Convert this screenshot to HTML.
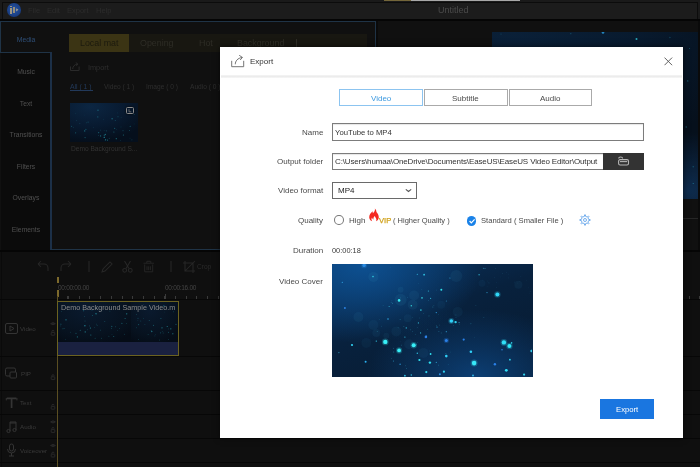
<!DOCTYPE html>
<html><head><meta charset="utf-8">
<style>
*{margin:0;padding:0;box-sizing:border-box}
html,body{width:700px;height:467px;overflow:hidden;background:#101010;font-family:"Liberation Sans",sans-serif}
.a{position:absolute}
.t{position:absolute;white-space:nowrap;line-height:1;will-change:transform}
.dim{color:#3a3a3a}
</style></head><body>
<!-- ===== background app ===== -->
<div class="a" style="left:0;top:0;width:700px;height:20px;background:#1a1a1a"></div>
<div class="a" style="left:384px;top:0;width:27px;height:1px;background:#74663a"></div>
<div class="a" style="left:411px;top:0;width:109px;height:1px;background:#a8a8a8"></div>
<!-- title bar -->
<div class="a" style="left:1.5px;top:1.5px;width:696.5px;height:18px;background:#1c1c1c;border:1px solid #0c0c0c;border-bottom:none"></div>
<div class="a" style="left:0;top:19px;width:700px;height:2px;background:#050505"></div>
<!-- logo -->
<div class="a" style="left:7px;top:2.9px;width:13.5px;height:13.7px;border-radius:50%;background:radial-gradient(circle at 50% 45%,#2452a0,#1c4288 55%,#15326e 85%,#0f2656)"></div>
<div class="a" style="left:10.3px;top:6px;width:1.4px;height:1.3px;background:#9c9684"></div>
<div class="a" style="left:10.3px;top:8.3px;width:1.4px;height:5.5px;background:#9c9684"></div>
<div class="a" style="left:13.3px;top:7px;width:1.5px;height:5.5px;background:#948e7c"></div>
<svg class="a" style="left:15.5px;top:7.8px" width="3" height="4" viewBox="0 0 3 4"><path d="M0.2 0.2L2.4 1.8 0.2 3.6z" fill="#a8a290"/></svg>
<div class="t" style="left:27.5px;top:6.9px;font-size:7.5px;color:#2c2c2c">File</div>
<div class="t" style="left:47px;top:6.9px;font-size:7.5px;color:#2c2c2c">Edit</div>
<div class="t" style="left:67.3px;top:6.9px;font-size:7.5px;color:#2c2c2c">Export</div>
<div class="t" style="left:95.5px;top:6.9px;font-size:7.5px;color:#2c2c2c">Help</div>
<div class="t" style="left:438px;top:5.5px;font-size:9px;color:#4a4a4a">Untitled</div>

<!-- left sidebar -->
<div class="a" style="left:0;top:21px;width:700px;height:230px;background:#101010"></div>
<div class="a" style="left:0;top:21px;width:376px;height:1px;background:#1f3346"></div>
<div class="a" style="left:0;top:21px;width:1px;height:32px;background:#1f3346"></div>
<div class="a" style="left:0;top:52px;width:51px;height:1px;background:#1f3346"></div>
<div class="a" style="left:1px;top:53px;width:49.5px;height:197px;background:#0b0b0b"></div>
<div class="a" style="left:50.4px;top:52px;width:1.3px;height:198px;background:#1c3048"></div>
<div class="a" style="left:51px;top:249px;width:325px;height:1px;background:#1f3346"></div>
<div class="a" style="left:375px;top:21px;width:1px;height:229px;background:#1f3346"></div>
<div class="t" style="left:1px;width:50px;text-align:center;top:36.8px;font-size:6.8px;color:#2e4e76">Media</div>
<div class="t" style="left:1px;width:50px;text-align:center;top:68.6px;font-size:6.8px;color:#505050">Music</div>
<div class="t" style="left:1px;width:50px;text-align:center;top:100.6px;font-size:6.8px;color:#505050">Text</div>
<div class="t" style="left:1px;width:50px;text-align:center;top:132.2px;font-size:6.8px;color:#505050">Transitions</div>
<div class="t" style="left:1px;width:50px;text-align:center;top:164.0px;font-size:6.8px;color:#505050">Filters</div>
<div class="t" style="left:1px;width:50px;text-align:center;top:195.4px;font-size:6.8px;color:#505050">Overlays</div>
<div class="t" style="left:1px;width:50px;text-align:center;top:227.3px;font-size:6.8px;color:#505050">Elements</div>

<!-- media tab bar -->
<div class="a" style="left:69px;top:34px;width:298px;height:18px;background:#181711"></div>
<div class="a" style="left:69px;top:34px;width:60px;height:18px;background:#3b3414"></div>
<div class="t" style="left:80.3px;top:39.2px;font-size:8.9px;color:#1c1a0e">Local mat</div>
<div class="t" style="left:140.3px;top:39.2px;font-size:8.9px;color:#2e2d26">Opening</div>
<div class="t" style="left:199.2px;top:39.2px;font-size:8.9px;color:#2e2d26">Hot</div>
<div class="t" style="left:237.3px;top:39.2px;font-size:8.9px;color:#2e2d26">Background</div>
<div class="a" style="left:296px;top:39px;width:1px;height:9px;background:#2e2d26"></div>
<!-- import -->
<svg class="a" style="left:69px;top:62px" width="12" height="10" viewBox="0 0 12 10" fill="none" stroke="#2a2a2a" stroke-width="1"><path d="M1.5 4.5v4h8.6v-4"/><path d="M3.7 7C3.7 4.5 5.5 2.5 8.5 2M6.8 0.6l2 1.4-1.4 1.8"/></svg>
<div class="t" style="left:87.6px;top:64px;font-size:7.3px;color:#2e2e2e">Import</div>
<div class="t" style="left:70px;top:84px;font-size:6.8px;color:#22395a">All ( 1 )</div>
<div class="a" style="left:70px;top:90px;width:23px;height:1px;background:#22395a"></div>
<div class="t" style="left:103.7px;top:84px;font-size:6.6px;color:#2e2e2e">Video ( 1 )</div>
<div class="t" style="left:146.2px;top:84px;font-size:6.6px;color:#2e2e2e">Image ( 0 )</div>
<div class="t" style="left:189.6px;top:84px;font-size:6.6px;color:#2e2e2e">Audio ( 0 )</div>
<!-- thumb -->
<div class="a" style="left:70px;top:103px;width:68px;height:39px;background:radial-gradient(ellipse 90% 90% at 30% 10%,#0c2642,#081a30 55%,#050f1c);overflow:hidden">
<svg width="68" height="39" viewBox="0 0 68 39"><circle cx="5.6" cy="29.8" r="0.67" fill="#2fb8c8" opacity="0.36"/><circle cx="3.5" cy="24.6" r="0.37" fill="#2fb8c8" opacity="0.38"/><circle cx="5.8" cy="10.2" r="0.34" fill="#2fb8c8" opacity="0.31"/><circle cx="61.9" cy="36.8" r="0.58" fill="#2fb8c8" opacity="0.21"/><circle cx="14.6" cy="12.0" r="0.36" fill="#2fb8c8" opacity="0.21"/><circle cx="23.6" cy="24.6" r="0.38" fill="#2fb8c8" opacity="0.28"/><circle cx="53.0" cy="27.8" r="0.48" fill="#2fb8c8" opacity="0.49"/><circle cx="1.6" cy="23.3" r="0.50" fill="#2fb8c8" opacity="0.43"/><circle cx="14.7" cy="27.9" r="0.70" fill="#2fb8c8" opacity="0.55"/><circle cx="47.8" cy="9.9" r="0.43" fill="#2fb8c8" opacity="0.28"/><circle cx="28.7" cy="29.7" r="0.61" fill="#2fb8c8" opacity="0.34"/><circle cx="42.1" cy="15.8" r="0.68" fill="#2fb8c8" opacity="0.50"/><circle cx="44.6" cy="25.4" r="0.66" fill="#2fb8c8" opacity="0.36"/><circle cx="51.0" cy="23.9" r="0.33" fill="#2fb8c8" opacity="0.42"/><circle cx="33.5" cy="16.2" r="0.33" fill="#2fb8c8" opacity="0.32"/><circle cx="64.1" cy="20.9" r="0.35" fill="#2fb8c8" opacity="0.29"/><circle cx="36.4" cy="27.8" r="0.62" fill="#2fb8c8" opacity="0.26"/><circle cx="9.9" cy="20.7" r="0.38" fill="#2fb8c8" opacity="0.46"/><circle cx="50.5" cy="37.7" r="0.35" fill="#2fb8c8" opacity="0.35"/><circle cx="34.3" cy="34.4" r="0.69" fill="#2fb8c8" opacity="0.48"/><circle cx="35.6" cy="36.7" r="0.64" fill="#2fb8c8" opacity="0.42"/><circle cx="34.2" cy="34.2" r="0.61" fill="#2fb8c8" opacity="0.32"/><circle cx="28.3" cy="29.7" r="0.34" fill="#2fb8c8" opacity="0.40"/><circle cx="15.1" cy="34.6" r="0.68" fill="#2fb8c8" opacity="0.37"/><circle cx="35.4" cy="31.5" r="0.66" fill="#2fb8c8" opacity="0.49"/><circle cx="30.6" cy="32.9" r="0.60" fill="#2fb8c8" opacity="0.53"/><circle cx="51.1" cy="14.6" r="0.47" fill="#2fb8c8" opacity="0.24"/><circle cx="16.6" cy="19.8" r="0.37" fill="#2fb8c8" opacity="0.45"/><circle cx="43.9" cy="28.9" r="0.52" fill="#2fb8c8" opacity="0.50"/><circle cx="18.1" cy="19.1" r="0.67" fill="#2fb8c8" opacity="0.27"/><circle cx="46.7" cy="26.3" r="0.48" fill="#2fb8c8" opacity="0.22"/><circle cx="39.3" cy="35.4" r="0.53" fill="#2fb8c8" opacity="0.25"/><circle cx="60.2" cy="23.3" r="0.58" fill="#2fb8c8" opacity="0.40"/><circle cx="34.1" cy="27.8" r="0.31" fill="#2fb8c8" opacity="0.52"/><circle cx="59.4" cy="27.6" r="0.49" fill="#2fb8c8" opacity="0.46"/><circle cx="53.4" cy="32.0" r="0.59" fill="#2fb8c8" opacity="0.52"/><circle cx="28.0" cy="7.2" r="0.62" fill="#2fb8c8" opacity="0.52"/><circle cx="64.1" cy="11.5" r="0.47" fill="#2fb8c8" opacity="0.48"/><circle cx="48.0" cy="13.8" r="0.55" fill="#2fb8c8" opacity="0.33"/><circle cx="6.3" cy="17.4" r="0.33" fill="#2fb8c8" opacity="0.42"/><circle cx="27.8" cy="13.9" r="0.59" fill="#2fb8c8" opacity="0.40"/><circle cx="60.0" cy="35.1" r="0.31" fill="#2fb8c8" opacity="0.41"/><circle cx="15.9" cy="26.4" r="0.58" fill="#2fb8c8" opacity="0.37"/><circle cx="30.5" cy="27.1" r="0.42" fill="#2fb8c8" opacity="0.44"/><circle cx="34.3" cy="32.2" r="0.66" fill="#2fb8c8" opacity="0.43"/><circle cx="37.5" cy="37.1" r="0.62" fill="#2fb8c8" opacity="0.52"/><circle cx="45.3" cy="17.5" r="0.53" fill="#2fb8c8" opacity="0.31"/><circle cx="46.3" cy="35.7" r="0.63" fill="#2fb8c8" opacity="0.50"/><circle cx="28.5" cy="32.4" r="0.48" fill="#2fb8c8" opacity="0.30"/><circle cx="35.3" cy="37.1" r="0.55" fill="#2fb8c8" opacity="0.37"/></svg></div>
<div class="a" style="left:125.8px;top:107px;width:8.2px;height:7px;border:1px solid #8a8a8a;border-radius:1.5px;box-shadow:0 0 2px #000"></div><svg class="a" style="left:127px;top:108px" width="6" height="5" viewBox="0 0 6 5"><path d="M2 1.2v2.6h2.3" fill="none" stroke="#777" stroke-width="0.8"/></svg>
<div class="t" style="left:70.5px;top:145.5px;font-size:6.6px;color:#333">Demo Background S...</div>

<!-- preview -->
<div class="a" style="left:376px;top:21px;width:2px;height:230px;background:#0a0a0a"></div>
<div class="a" style="left:491.5px;top:31.5px;width:206px;height:167.5px;background:radial-gradient(ellipse 40% 35% at 95% 95%,rgba(14,44,78,1),rgba(14,44,78,0)),radial-gradient(ellipse 120% 80% at 10% 0%,#0a2038,#081a2e 50%,#06101c);overflow:hidden"><svg width="206" height="168" viewBox="0 0 206 168"><circle cx="170.3" cy="141.0" r="0.63" fill="#30c0e0" opacity="0.58"/><circle cx="75.1" cy="128.8" r="0.67" fill="#30c0e0" opacity="0.46"/><circle cx="120.1" cy="112.3" r="0.75" fill="#30c0e0" opacity="0.34"/><circle cx="54.6" cy="59.4" r="0.58" fill="#30c0e0" opacity="0.47"/><circle cx="135.7" cy="157.5" r="0.36" fill="#30c0e0" opacity="0.33"/><circle cx="124.6" cy="103.9" r="0.79" fill="#30c0e0" opacity="0.36"/><circle cx="159.7" cy="80.2" r="0.60" fill="#30c0e0" opacity="0.55"/><circle cx="68.9" cy="57.6" r="0.59" fill="#30c0e0" opacity="0.45"/><circle cx="95.9" cy="107.8" r="0.74" fill="#30c0e0" opacity="0.41"/><circle cx="109.8" cy="144.6" r="0.41" fill="#30c0e0" opacity="0.52"/><circle cx="48.9" cy="83.9" r="0.71" fill="#30c0e0" opacity="0.24"/><circle cx="79.1" cy="97.8" r="0.67" fill="#30c0e0" opacity="0.25"/><circle cx="51.0" cy="79.8" r="0.54" fill="#30c0e0" opacity="0.47"/><circle cx="4.8" cy="69.9" r="0.54" fill="#30c0e0" opacity="0.37"/><circle cx="55.8" cy="69.2" r="0.54" fill="#30c0e0" opacity="0.29"/><circle cx="119.1" cy="97.3" r="0.65" fill="#30c0e0" opacity="0.43"/><circle cx="194.2" cy="95.0" r="0.77" fill="#30c0e0" opacity="0.37"/><circle cx="28.6" cy="146.5" r="0.77" fill="#30c0e0" opacity="0.31"/><circle cx="67.4" cy="120.0" r="0.61" fill="#30c0e0" opacity="0.39"/><circle cx="79.7" cy="142.2" r="0.32" fill="#30c0e0" opacity="0.32"/><circle cx="177.6" cy="75.6" r="0.44" fill="#30c0e0" opacity="0.57"/><circle cx="47.9" cy="118.8" r="0.32" fill="#30c0e0" opacity="0.26"/><circle cx="98.8" cy="124.4" r="0.74" fill="#30c0e0" opacity="0.31"/><circle cx="83.3" cy="164.0" r="0.76" fill="#30c0e0" opacity="0.32"/><circle cx="87.4" cy="27.7" r="0.58" fill="#30c0e0" opacity="0.44"/><circle cx="195.8" cy="48.9" r="0.55" fill="#30c0e0" opacity="0.54"/><circle cx="35.0" cy="127.1" r="0.78" fill="#30c0e0" opacity="0.42"/><circle cx="91.6" cy="33.5" r="0.76" fill="#30c0e0" opacity="0.45"/><circle cx="18.0" cy="94.4" r="0.43" fill="#30c0e0" opacity="0.24"/><circle cx="117.8" cy="119.2" r="0.52" fill="#30c0e0" opacity="0.42"/><circle cx="79.5" cy="140.3" r="0.51" fill="#30c0e0" opacity="0.25"/><circle cx="89.4" cy="116.6" r="0.66" fill="#30c0e0" opacity="0.26"/><circle cx="57.2" cy="47.7" r="0.62" fill="#30c0e0" opacity="0.46"/><circle cx="31.5" cy="21.4" r="0.32" fill="#30c0e0" opacity="0.36"/><circle cx="74.2" cy="149.9" r="0.77" fill="#30c0e0" opacity="0.55"/><circle cx="183.1" cy="117.7" r="0.77" fill="#30c0e0" opacity="0.42"/><circle cx="201.2" cy="151.4" r="0.51" fill="#30c0e0" opacity="0.59"/><circle cx="177.9" cy="5.6" r="0.77" fill="#30c0e0" opacity="0.23"/><circle cx="99.1" cy="35.7" r="0.37" fill="#30c0e0" opacity="0.35"/><circle cx="76.4" cy="80.9" r="0.52" fill="#30c0e0" opacity="0.51"/><circle cx="80.9" cy="82.4" r="0.80" fill="#30c0e0" opacity="0.29"/><circle cx="197.6" cy="16.6" r="0.50" fill="#30c0e0" opacity="0.38"/><circle cx="120.9" cy="89.8" r="0.78" fill="#30c0e0" opacity="0.52"/><circle cx="152.5" cy="110.8" r="0.59" fill="#30c0e0" opacity="0.52"/><circle cx="156.0" cy="71.7" r="0.40" fill="#30c0e0" opacity="0.21"/><circle cx="135.4" cy="33.0" r="0.49" fill="#30c0e0" opacity="0.41"/><circle cx="119.5" cy="112.6" r="0.42" fill="#30c0e0" opacity="0.30"/><circle cx="116.9" cy="49.8" r="0.35" fill="#30c0e0" opacity="0.55"/><circle cx="66.4" cy="79.0" r="0.64" fill="#30c0e0" opacity="0.47"/><circle cx="9.0" cy="2.0" r="0.51" fill="#30c0e0" opacity="0.29"/><circle cx="78.8" cy="1.7" r="0.65" fill="#30c0e0" opacity="0.27"/><circle cx="5.4" cy="148.7" r="0.49" fill="#30c0e0" opacity="0.44"/><circle cx="33.4" cy="140.3" r="0.71" fill="#30c0e0" opacity="0.32"/><circle cx="128.6" cy="158.7" r="0.37" fill="#30c0e0" opacity="0.54"/><circle cx="41.6" cy="76.8" r="0.56" fill="#30c0e0" opacity="0.47"/><circle cx="167.2" cy="94.4" r="0.33" fill="#30c0e0" opacity="0.25"/><circle cx="55.8" cy="139.6" r="0.54" fill="#30c0e0" opacity="0.44"/><circle cx="42.9" cy="128.2" r="0.73" fill="#30c0e0" opacity="0.42"/><circle cx="159.1" cy="83.6" r="0.31" fill="#30c0e0" opacity="0.32"/><circle cx="117.9" cy="62.4" r="0.40" fill="#30c0e0" opacity="0.52"/><circle cx="188.0" cy="159.3" r="0.41" fill="#30c0e0" opacity="0.36"/><circle cx="53.2" cy="68.0" r="0.69" fill="#30c0e0" opacity="0.38"/><circle cx="201.2" cy="134.7" r="0.71" fill="#30c0e0" opacity="0.30"/><circle cx="41.3" cy="62.4" r="0.57" fill="#30c0e0" opacity="0.50"/><circle cx="18.8" cy="134.7" r="0.37" fill="#30c0e0" opacity="0.55"/><circle cx="111" cy="0.5" r="1.3" fill="#2a9ee0" opacity=".8"/><circle cx="144.5" cy="7" r="1" fill="#30c8d8" opacity=".8"/></svg></div>
<div class="a" style="left:697.5px;top:21px;width:3px;height:446px;background:#0a0a0a"></div>
<div class="a" style="left:378px;top:218px;width:320px;height:1px;background:#262626"></div>

<!-- divider -->
<div class="a" style="left:0;top:250px;width:700px;height:2px;background:#050505"></div>
<div class="a" style="left:0;top:252px;width:700px;height:215px;background:#0f0f0f"></div>
<div class="a" style="left:1px;top:252px;width:1px;height:215px;background:#0a0a0a"></div>
<!-- toolbar icons -->
<svg class="a" style="left:36px;top:260px" width="180" height="14" viewBox="0 0 180 14" fill="none" stroke="#272727" stroke-width="1.05">
<path d="M2 4l3-3M2 4l3 3M2 4h6a4 4 0 0 1 4 4v3"/>
<path d="M35 4l-3-3M35 4l-3 3M35 4h-6a4 4 0 0 0-4 4v3"/>
<path d="M53 1v11"/>
<path d="M66 12l1-3 7-7 2 2-7 7z"/>
<path d="M88.5 1l4.5 7.6M94.5 1L90 8.6"/><circle cx="88.7" cy="10.3" r="1.9"/><circle cx="94.3" cy="10.3" r="1.9"/>
<path d="M107.5 3.2h10.5M110.8 3V1.3h4V3M108.7 4.5v7.3h8V4.5M111 6.3v3.8M112.7 6.3v3.8M114.4 6.3v3.8" stroke-width="0.9"/>
<path d="M135 1v11"/>
<path d="M149 1v10h10M147 3h10v10M149 11l10-10"/>
</svg>
<div class="t" style="left:197px;top:263.5px;font-size:6.6px;color:#2a2a2a">Crop</div>
<!-- ruler -->
<div class="a" style="left:57px;top:277px;width:2.4px;height:5.5px;background:#7d6a2c"></div><div class="a" style="left:57px;top:290px;width:2.4px;height:6.5px;background:#7d6a2c"></div>
<div class="t" style="left:57.5px;top:285px;font-size:6.5px;color:#444;letter-spacing:-0.3px">00:00:00.00</div>
<div class="t" style="left:165px;top:285.2px;font-size:6.5px;color:#444;letter-spacing:-0.3px">00:00:16.00</div>
<div class="a" style="left:57px;top:296px;width:643px;height:3px;background:repeating-linear-gradient(90deg,#3a3a3a 0 1px,transparent 1px 10.7px);background-position:11px 0"></div>
<div class="a" style="left:165px;top:293.5px;width:1px;height:5px;background:#3a3a3a"></div>
<div class="a" style="left:0;top:299px;width:700px;height:1px;background:#070707"></div>
<!-- tracks -->
<div class="a" style="left:0;top:356px;width:700px;height:1px;background:#070707"></div>
<div class="a" style="left:0;top:390px;width:700px;height:1px;background:#070707"></div>
<div class="a" style="left:0;top:414px;width:700px;height:1px;background:#070707"></div>
<div class="a" style="left:0;top:438px;width:700px;height:1px;background:#070707"></div>
<div class="a" style="left:0;top:462px;width:700px;height:1px;background:#070707"></div>
<div class="a" style="left:57px;top:296px;width:1px;height:171px;background:#5a4e22"></div>
<!-- clip -->
<div class="a" style="left:57px;top:301px;width:122px;height:54.5px;border:1px solid #6b6220;background:#1a2140;overflow:hidden">
 <div class="a" style="left:0;top:0;width:73px;height:40px;background:radial-gradient(ellipse 80% 90% at 40% 20%,#0a1a2e,#07121f 70%,#050c16);"></div>
 <div class="a" style="left:73px;top:0;width:47px;height:40px;background:radial-gradient(ellipse 80% 90% at 40% 20%,#0a1a2e,#07121f 70%,#050c16);"></div>
 <svg class="a" style="left:0;top:0" width="120" height="40" viewBox="0 0 120 40"><circle cx="4.9" cy="26.8" r="0.57" fill="#2fb8c8" opacity="0.31"/><circle cx="57.7" cy="24.8" r="0.41" fill="#2fb8c8" opacity="0.61"/><circle cx="25.7" cy="8.8" r="0.52" fill="#2fb8c8" opacity="0.55"/><circle cx="50.9" cy="34.2" r="0.36" fill="#2fb8c8" opacity="0.66"/><circle cx="66.3" cy="32.3" r="0.43" fill="#2fb8c8" opacity="0.43"/><circle cx="38.8" cy="22.1" r="0.32" fill="#2fb8c8" opacity="0.66"/><circle cx="26.9" cy="23.7" r="0.69" fill="#2fb8c8" opacity="0.68"/><circle cx="54.0" cy="32.2" r="0.35" fill="#2fb8c8" opacity="0.39"/><circle cx="27.0" cy="19.0" r="0.58" fill="#2fb8c8" opacity="0.27"/><circle cx="18.0" cy="31.3" r="0.54" fill="#2fb8c8" opacity="0.46"/><circle cx="32.4" cy="26.0" r="0.59" fill="#2fb8c8" opacity="0.69"/><circle cx="68.5" cy="21.4" r="0.44" fill="#2fb8c8" opacity="0.41"/><circle cx="24.5" cy="7.3" r="0.35" fill="#2fb8c8" opacity="0.36"/><circle cx="19.4" cy="34.9" r="0.62" fill="#2fb8c8" opacity="0.48"/><circle cx="12.5" cy="30.2" r="0.39" fill="#2fb8c8" opacity="0.44"/><circle cx="7.8" cy="37.3" r="0.34" fill="#2fb8c8" opacity="0.50"/><circle cx="53.7" cy="26.2" r="0.44" fill="#2fb8c8" opacity="0.54"/><circle cx="59.5" cy="28.3" r="0.38" fill="#2fb8c8" opacity="0.38"/><circle cx="27.2" cy="29.9" r="0.60" fill="#2fb8c8" opacity="0.66"/><circle cx="53.8" cy="24.4" r="0.61" fill="#2fb8c8" opacity="0.40"/><circle cx="36.7" cy="25.6" r="0.32" fill="#2fb8c8" opacity="0.53"/><circle cx="31.7" cy="23.9" r="0.43" fill="#2fb8c8" opacity="0.60"/><circle cx="51.9" cy="9.1" r="0.39" fill="#2fb8c8" opacity="0.49"/><circle cx="6.1" cy="26.4" r="0.41" fill="#2fb8c8" opacity="0.68"/><circle cx="46.8" cy="19.6" r="0.42" fill="#2fb8c8" opacity="0.64"/><circle cx="2.9" cy="22.2" r="0.58" fill="#2fb8c8" opacity="0.35"/><circle cx="32.8" cy="33.0" r="0.57" fill="#2fb8c8" opacity="0.56"/><circle cx="22.2" cy="28.3" r="0.47" fill="#2fb8c8" opacity="0.69"/><circle cx="8.0" cy="17.8" r="0.67" fill="#2fb8c8" opacity="0.68"/><circle cx="38.0" cy="11.5" r="0.54" fill="#2fb8c8" opacity="0.66"/><circle cx="43.5" cy="8.7" r="0.44" fill="#2fb8c8" opacity="0.42"/><circle cx="34.0" cy="8.6" r="0.31" fill="#2fb8c8" opacity="0.57"/><circle cx="68.7" cy="11.8" r="0.66" fill="#2fb8c8" opacity="0.66"/><circle cx="29.3" cy="27.7" r="0.44" fill="#2fb8c8" opacity="0.39"/><circle cx="67.1" cy="16.6" r="0.52" fill="#2fb8c8" opacity="0.53"/><circle cx="55.7" cy="34.5" r="0.58" fill="#2fb8c8" opacity="0.43"/><circle cx="37.1" cy="36.3" r="0.43" fill="#2fb8c8" opacity="0.56"/><circle cx="42.5" cy="28.1" r="0.42" fill="#2fb8c8" opacity="0.56"/><circle cx="38.4" cy="6.4" r="0.67" fill="#2fb8c8" opacity="0.41"/><circle cx="61.4" cy="26.6" r="0.48" fill="#2fb8c8" opacity="0.33"/><circle cx="26.6" cy="14.5" r="0.40" fill="#2fb8c8" opacity="0.40"/><circle cx="39.1" cy="23.5" r="0.44" fill="#2fb8c8" opacity="0.38"/><circle cx="43.5" cy="36.2" r="0.39" fill="#2fb8c8" opacity="0.66"/><circle cx="2.6" cy="23.9" r="0.36" fill="#2fb8c8" opacity="0.46"/><circle cx="3.5" cy="9.7" r="0.40" fill="#2fb8c8" opacity="0.46"/><circle cx="61.8" cy="6.1" r="0.39" fill="#2fb8c8" opacity="0.49"/><circle cx="38.1" cy="12.0" r="0.57" fill="#2fb8c8" opacity="0.55"/><circle cx="63.9" cy="21.4" r="0.57" fill="#2fb8c8" opacity="0.41"/><circle cx="34.4" cy="13.5" r="0.50" fill="#2fb8c8" opacity="0.41"/><circle transform="translate(73 0)" cx="12.5" cy="2.6" r="0.37" fill="#2fb8c8" opacity="0.35"/><circle transform="translate(73 0)" cx="29.6" cy="30.8" r="0.59" fill="#2fb8c8" opacity="0.31"/><circle transform="translate(73 0)" cx="13.9" cy="22.4" r="0.42" fill="#2fb8c8" opacity="0.44"/><circle transform="translate(73 0)" cx="33.6" cy="10.0" r="0.31" fill="#2fb8c8" opacity="0.37"/><circle transform="translate(73 0)" cx="32.9" cy="3.8" r="0.63" fill="#2fb8c8" opacity="0.59"/><circle transform="translate(73 0)" cx="9.8" cy="19.0" r="0.45" fill="#2fb8c8" opacity="0.44"/><circle transform="translate(73 0)" cx="20.8" cy="29.5" r="0.63" fill="#2fb8c8" opacity="0.61"/><circle transform="translate(73 0)" cx="45.0" cy="22.3" r="0.52" fill="#2fb8c8" opacity="0.59"/><circle transform="translate(73 0)" cx="37.5" cy="37.5" r="0.48" fill="#2fb8c8" opacity="0.33"/><circle transform="translate(73 0)" cx="28.5" cy="38.0" r="0.40" fill="#2fb8c8" opacity="0.46"/><circle transform="translate(73 0)" cx="12.3" cy="16.6" r="0.35" fill="#2fb8c8" opacity="0.47"/><circle transform="translate(73 0)" cx="24.4" cy="32.8" r="0.38" fill="#2fb8c8" opacity="0.41"/><circle transform="translate(73 0)" cx="41.8" cy="31.7" r="0.68" fill="#2fb8c8" opacity="0.43"/><circle transform="translate(73 0)" cx="31.0" cy="25.8" r="0.62" fill="#2fb8c8" opacity="0.63"/><circle transform="translate(73 0)" cx="18.2" cy="18.6" r="0.47" fill="#2fb8c8" opacity="0.64"/><circle transform="translate(73 0)" cx="42.7" cy="9.8" r="0.38" fill="#2fb8c8" opacity="0.63"/><circle transform="translate(73 0)" cx="7.7" cy="37.5" r="0.35" fill="#2fb8c8" opacity="0.69"/><circle transform="translate(73 0)" cx="5.5" cy="12.4" r="0.38" fill="#2fb8c8" opacity="0.53"/><circle transform="translate(73 0)" cx="7.0" cy="16.2" r="0.44" fill="#2fb8c8" opacity="0.58"/><circle transform="translate(73 0)" cx="17.1" cy="32.4" r="0.37" fill="#2fb8c8" opacity="0.56"/><circle transform="translate(73 0)" cx="31.2" cy="29.6" r="0.33" fill="#2fb8c8" opacity="0.54"/><circle transform="translate(73 0)" cx="6.9" cy="18.8" r="0.32" fill="#2fb8c8" opacity="0.45"/><circle transform="translate(73 0)" cx="20.1" cy="28.4" r="0.30" fill="#2fb8c8" opacity="0.70"/><circle transform="translate(73 0)" cx="32.1" cy="31.0" r="0.41" fill="#2fb8c8" opacity="0.52"/><circle transform="translate(73 0)" cx="37.5" cy="30.3" r="0.45" fill="#2fb8c8" opacity="0.63"/><circle transform="translate(73 0)" cx="36.2" cy="24.4" r="0.50" fill="#2fb8c8" opacity="0.69"/><circle transform="translate(73 0)" cx="7.6" cy="22.6" r="0.57" fill="#2fb8c8" opacity="0.38"/><circle transform="translate(73 0)" cx="39.8" cy="26.8" r="0.66" fill="#2fb8c8" opacity="0.58"/><circle transform="translate(73 0)" cx="29.9" cy="16.5" r="0.54" fill="#2fb8c8" opacity="0.41"/><circle transform="translate(73 0)" cx="23.9" cy="33.9" r="0.38" fill="#2fb8c8" opacity="0.41"/><circle transform="translate(73 0)" cx="37.3" cy="26.9" r="0.33" fill="#2fb8c8" opacity="0.59"/><circle transform="translate(73 0)" cx="22.5" cy="23.4" r="0.61" fill="#2fb8c8" opacity="0.34"/><circle transform="translate(73 0)" cx="5.7" cy="25.8" r="0.43" fill="#2fb8c8" opacity="0.38"/></svg>
 <div class="t" style="left:3px;top:2.2px;font-size:7.2px;color:#8c8c8c">Demo Background Sample Video.m</div>
</div>
<!-- track headers -->
<svg class="a" style="left:4px;top:322px" width="52" height="140" viewBox="0 0 52 140" fill="none" stroke="#343434" stroke-width="1">
<rect x="1.5" y="1.5" width="12" height="10" rx="1.5"/><path d="M6 4v5l4-2.5z"/>
<rect x="1.5" y="46" width="10" height="8" rx="1.5"/><rect x="6" y="50" width="6.5" height="6" rx="1" fill="#0f0f0f"/>
<path d="M2.8 76.3h9.6M7.6 76.3v9.6" stroke-width="1.7"/><path d="M2.3 76v2.4M12.9 76v2.4" stroke-width="1"/>
<path d="M6 109v-9h6v8M6 101h6"/><circle cx="4.5" cy="109" r="1.6"/><circle cx="10.5" cy="108" r="1.6"/>
<rect x="5.5" y="122" width="4" height="7" rx="2"/><path d="M3.5 127a4 4 0 0 0 8 0M7.5 131v3M5 134h5"/>
</svg>
<div class="t" style="left:20.4px;top:325.8px;font-size:6.2px;color:#3a3a3a">Video</div>
<div class="t" style="left:20.5px;top:370.8px;font-size:6.2px;color:#3a3a3a">PIP</div>
<div class="t" style="left:20px;top:400px;font-size:6.2px;color:#3a3a3a">Text</div>
<div class="t" style="left:20px;top:424px;font-size:6.2px;color:#3a3a3a">Audio</div>
<div class="t" style="left:19.5px;top:448px;font-size:6.2px;color:#3a3a3a">Voiceover</div>
<svg class="a" style="left:49px;top:320px" width="8" height="140" viewBox="0 0 8 140" fill="none" stroke="#2e2e2e" stroke-width="0.8"><path d="M1.6 3.7q2.4-2.2 4.8 0q-2.4 2.2-4.8 0z"/><circle cx="4" cy="3.7" r="0.7" fill="#2e2e2e" stroke="none"/><rect x="2.2" y="12.4" width="3.6" height="2.8" rx="0.4"/><path d="M2.9 12.4v-1a1.1 1.1 0 0 1 2.2 0"/><rect x="2.2" y="56.8" width="3.6" height="2.8" rx="0.4"/><path d="M2.9 56.8v-1a1.1 1.1 0 0 1 2.2 0"/><rect x="2.2" y="86.4" width="3.6" height="2.8" rx="0.4"/><path d="M2.9 86.4v-1a1.1 1.1 0 0 1 2.2 0"/><path d="M1.6 101.9q2.4-2.2 4.8 0q-2.4 2.2-4.8 0z"/><circle cx="4" cy="101.9" r="0.7" fill="#2e2e2e" stroke="none"/><rect x="2.2" y="109.6" width="3.6" height="2.8" rx="0.4"/><path d="M2.9 109.6v-1a1.1 1.1 0 0 1 2.2 0"/><path d="M1.6 125.5q2.4-2.2 4.8 0q-2.4 2.2-4.8 0z"/><circle cx="4" cy="125.5" r="0.7" fill="#2e2e2e" stroke="none"/><rect x="2.2" y="134.2" width="3.6" height="2.8" rx="0.4"/><path d="M2.9 134.2v-1a1.1 1.1 0 0 1 2.2 0"/></svg>

<!-- ===== dialog ===== -->
<div class="a" style="left:220px;top:47px;width:463px;height:391px;background:#fff;box-shadow:0 0 6px rgba(0,0,0,.6)"></div>
<div class="a" style="left:220.5px;top:74.5px;width:461.5px;height:3px;background:linear-gradient(#f6f6f6,#ebebeb 45%,#f7f7f7 100%)"></div>
<svg class="a" style="left:230px;top:54px" width="16" height="14" viewBox="0 0 16 14" fill="none" stroke="#666" stroke-width="0.9">
<path d="M1.7 6.8v5.9h12V6.8"/><path d="M5.3 10.3C5.3 7 7.5 4.2 12.3 3.4M9.2 1.3l3.2 2.1-2.2 2.6"/>
</svg>
<div class="t" style="left:249.5px;top:57.7px;font-size:8px;color:#333">Export</div>
<svg class="a" style="left:664px;top:57px" width="9" height="9" viewBox="0 0 9 9"><path d="M0.5 0.6l7.6 7.6M8.1 0.6L0.5 8.2" stroke="#5a5a5a" stroke-width="0.95"/></svg>

<!-- tabs -->
<div class="a" style="left:339px;top:89px;width:84px;height:17px;border:1px solid #8cc4f0"></div>
<div class="t" style="left:370.8px;top:94.7px;font-size:8px;color:#3d9ae0">Video</div>
<div class="a" style="left:424px;top:89px;width:84px;height:17px;border:1px solid #aaa"></div>
<div class="t" style="left:452px;top:94.7px;font-size:8px;color:#4a4a4a">Subtitle</div>
<div class="a" style="left:509px;top:89px;width:83px;height:17px;border:1px solid #aaa"></div>
<div class="t" style="left:539.5px;top:94.7px;font-size:8px;color:#4a4a4a">Audio</div>

<!-- form -->
<div class="t" style="right:376.8px;top:128.6px;font-size:8px;color:#4a4a4a;text-align:right">Name</div>
<div class="a" style="left:332px;top:123px;width:312px;height:17.6px;border:1px solid #7c7c7c;box-shadow:inset 0 1px 1px #e6e6e6"></div>
<div class="t" style="left:334.8px;top:128.6px;font-size:7.7px;color:#333">YouTube to MP4</div>

<div class="t" style="right:376.8px;top:158.3px;font-size:8px;color:#4a4a4a;text-align:right">Output folder</div>
<div class="a" style="left:332px;top:152.6px;width:271px;height:17px;border:1px solid #7c7c7c;border-right:none;box-shadow:inset 0 1px 1px #e6e6e6"></div>
<div class="t" style="left:334.5px;top:158.3px;font-size:8px;color:#333;letter-spacing:-0.14px">C:\Users\humaa\OneDrive\Documents\EaseUS\EaseUS Video Editor\Output</div>
<div class="a" style="left:602.5px;top:153px;width:41.5px;height:17px;background:#333"></div>
<svg class="a" style="left:617px;top:155px" width="14" height="12" viewBox="0 0 14 12" fill="none" stroke="#b5b5b5" stroke-width="1.1"><path d="M1.7 3.6q0-1.6 2-1.6q1.9 0 1.9 1.4"/><rect x="1.6" y="4.6" width="9.9" height="5.4" rx="1.5"/><path d="M3 6.6h7.2"/></svg>

<div class="t" style="right:376.8px;top:187.4px;font-size:8px;color:#4a4a4a;text-align:right">Video format</div>
<div class="a" style="left:332px;top:182px;width:85px;height:17px;border:1px solid #6a6a6a"></div>
<div class="t" style="left:338px;top:187.4px;font-size:8px;color:#222">MP4</div>
<svg class="a" style="left:404.5px;top:187.5px" width="7" height="5" viewBox="0 0 7 5"><path d="M0.8 1.4l2.7 2.1 2.7-2.1" fill="none" stroke="#555" stroke-width="1.1"/></svg>

<div class="t" style="right:376.8px;top:216.8px;font-size:8px;color:#4a4a4a;text-align:right">Quality</div>
<div class="a" style="left:334px;top:215px;width:9.6px;height:9.8px;border:1px solid #777;border-radius:50%"></div>
<div class="t" style="left:348.8px;top:216.8px;font-size:8px;color:#4a4a4a">High</div>
<svg class="a" style="left:367.5px;top:208.3px" width="12" height="14" viewBox="0 0 12 14"><path d="M6.8 0.6C7.6 3 5.6 4.2 5 5.6 4.6 4.8 4.6 4 4.9 3.2 2.6 4.6 1 7 1.2 9.4c.2 1.8 1.4 3.3 3 3.9-.9-1.2-1-2.6-.2-3.8.2 1 .8 1.7 1.5 2-.3-1.4.3-2.6 1.3-3.4.3 1.2 1.4 2.1 1.6 3.4.1.7-.1 1.3-.5 1.8 1.7-.6 2.9-2.2 2.9-4.1 0-2.6-1.6-3.7-2.2-5.4-.1.8-.4 1.4-.9 1.8C8.9 4.4 8.6 2.1 6.8 .6z" fill="#f42a22"/></svg>
<div class="t" style="left:379px;top:216.6px;font-size:7.6px;color:#d0a21c;-webkit-text-stroke:0.25px #d0a21c">VIP</div>
<div class="t" style="left:392.6px;top:216.8px;font-size:7.5px;color:#4a4a4a">( Higher Quality )</div>
<div class="a" style="left:466.5px;top:216px;width:9.5px;height:9.5px;background:#1a82e8;border-radius:50%"></div>
<svg class="a" style="left:466.5px;top:216px" width="10" height="10" viewBox="0 0 10 10"><path d="M2.6 5l1.7 1.8L7.6 3.4" fill="none" stroke="#fff" stroke-width="1.2"/></svg>
<div class="t" style="left:481.3px;top:216.8px;font-size:7.6px;color:#4a4a4a">Standard ( Smaller File )</div>
<svg class="a" style="left:579.2px;top:214.3px" width="12" height="12" viewBox="0 0 12 12" fill="none" stroke="#5fa2ea" stroke-width="0.85" stroke-linejoin="round"><path d="M5.42 2.35 L5.59 0.82 L6.41 0.82 L6.58 2.35 L8.17 3.01 L9.38 2.05 L9.95 2.62 L8.99 3.83 L9.65 5.42 L11.18 5.59 L11.18 6.41 L9.65 6.58 L8.99 8.17 L9.95 9.38 L9.38 9.95 L8.17 8.99 L6.58 9.65 L6.41 11.18 L5.59 11.18 L5.42 9.65 L3.83 8.99 L2.62 9.95 L2.05 9.38 L3.01 8.17 L2.35 6.58 L0.82 6.41 L0.82 5.59 L2.35 5.42 L3.01 3.83 L2.05 2.62 L2.62 2.05 L3.83 3.01Z"/><circle cx="6" cy="6" r="1.5"/></svg>

<div class="t" style="right:376.8px;top:246.6px;font-size:8px;color:#4a4a4a;text-align:right">Duration</div>
<div class="t" style="left:331.8px;top:246.6px;font-size:7.4px;color:#3a3a3a">00:00:18</div>
<div class="t" style="right:376.8px;top:277.5px;font-size:8px;color:#4a4a4a;text-align:right">Video Cover</div>

<div class="a" style="left:332px;top:264px;width:200.5px;height:113px;background:radial-gradient(ellipse 60% 70% at 15% 0%,rgba(13,80,145,1),rgba(13,80,145,0) 100%),radial-gradient(ellipse 55% 60% at 72% 100%,rgba(12,62,115,1),rgba(12,62,115,0) 100%),linear-gradient(160deg,#0a3462,#08213d 45%,#071a30);overflow:hidden">
<svg width="200" height="113" viewBox="0 0 200 113"><circle cx="41.4" cy="12.9" r="5" fill="#3aa0c8" opacity="0.1"/><circle cx="68.6" cy="35.7" r="6" fill="#3aa0c8" opacity="0.1"/><circle cx="82.1" cy="31.4" r="5" fill="#3aa0c8" opacity="0.08"/><circle cx="68.6" cy="25.7" r="3" fill="#3aa0c8" opacity="0.08"/><circle cx="80.7" cy="40.7" r="5" fill="#3aa0c8" opacity="0.08"/><circle cx="26.4" cy="53.0" r="5" fill="#3aa0c8" opacity="0.08"/><circle cx="75.7" cy="54.3" r="4" fill="#3aa0c8" opacity="0.07"/><circle cx="124.3" cy="12.1" r="6" fill="#3aa0c8" opacity="0.08"/><circle cx="150.0" cy="19.3" r="3.5" fill="#3aa0c8" opacity="0.06"/><circle cx="186.4" cy="20.7" r="4" fill="#3aa0c8" opacity="0.07"/><circle cx="109.3" cy="40.7" r="4" fill="#3aa0c8" opacity="0.06"/><circle cx="125.7" cy="47.9" r="5" fill="#3aa0c8" opacity="0.07"/><circle cx="41.4" cy="61.0" r="5" fill="#3aa0c8" opacity="0.07"/><circle cx="44.3" cy="68.9" r="4" fill="#3aa0c8" opacity="0.07"/><circle cx="54.3" cy="71.7" r="3" fill="#3aa0c8" opacity="0.07"/><circle cx="64.3" cy="67.4" r="5" fill="#3aa0c8" opacity="0.07"/><circle cx="77.1" cy="80.3" r="5" fill="#3aa0c8" opacity="0.07"/><circle cx="91.4" cy="88.9" r="5" fill="#3aa0c8" opacity="0.07"/><circle cx="34.3" cy="78.9" r="5" fill="#3aa0c8" opacity="0.06"/><circle cx="32.1" cy="1.4" r="2.9" fill="#2a8ae0" opacity="0.25"/><circle cx="32.1" cy="1.4" r="1.7" fill="#2a8ae0"/><circle cx="41.0" cy="12.6" r="0.8" fill="#30c8e0"/><circle cx="10.3" cy="18.3" r="0.6" fill="#30a0e0"/><circle cx="92.1" cy="10.7" r="0.9" fill="#30c0e0"/><circle cx="85.3" cy="10.3" r="0.6" fill="#30a8d0"/><circle cx="67.1" cy="36.4" r="1.3" fill="#38e8f0"/><circle cx="90.0" cy="33.9" r="0.8" fill="#30c8d8"/><circle cx="79.3" cy="41.7" r="0.7" fill="#30d0d8"/><circle cx="12.9" cy="44.0" r="1.0" fill="#2a80e0"/><circle cx="57.1" cy="42.4" r="0.5" fill="#30b0d0"/><circle cx="56.0" cy="55.0" r="0.8" fill="#2aa0e0"/><circle cx="88.9" cy="46.1" r="0.8" fill="#30c8d8"/><circle cx="96.4" cy="27.0" r="0.6" fill="#30b0d0"/><circle cx="98.6" cy="34.3" r="0.6" fill="#30b0d0"/><circle cx="165.4" cy="30.4" r="3.2" fill="#30d8f8" opacity="0.25"/><circle cx="165.4" cy="30.4" r="2.0" fill="#30d8f8"/><circle cx="109.3" cy="25.7" r="1.0" fill="#30e0e8"/><circle cx="147.1" cy="10.7" r="0.7" fill="#2aa0c0"/><circle cx="117.9" cy="14.0" r="0.6" fill="#2a90c0"/><circle cx="155.0" cy="28.6" r="0.6" fill="#2a90c0"/><circle cx="151.4" cy="4.3" r="0.5" fill="#2a80a0"/><circle cx="153.0" cy="4.6" r="0.5" fill="#2a80a0"/><circle cx="119.3" cy="57.0" r="3.0" fill="#30d0f8" opacity="0.25"/><circle cx="119.3" cy="57.0" r="1.8" fill="#30d0f8"/><circle cx="104.3" cy="48.6" r="0.7" fill="#2a90d0"/><circle cx="114.3" cy="37.1" r="0.5" fill="#2a80b0"/><circle cx="53.3" cy="77.9" r="3.4" fill="#38f0f8" opacity="0.25"/><circle cx="53.3" cy="77.9" r="2.2" fill="#38f0f8"/><circle cx="81.7" cy="81.3" r="3.2" fill="#38f0f8" opacity="0.25"/><circle cx="81.7" cy="81.3" r="2.0" fill="#38f0f8"/><circle cx="67.1" cy="86.4" r="3.1" fill="#38f0f8" opacity="0.25"/><circle cx="67.1" cy="86.4" r="1.9" fill="#38f0f8"/><circle cx="20.0" cy="81.0" r="1.1" fill="#30d0f0"/><circle cx="33.6" cy="97.7" r="1.0" fill="#2ab0f0"/><circle cx="44.3" cy="77.1" r="0.7" fill="#30c0e0"/><circle cx="93.9" cy="72.9" r="1.3" fill="#2a7ae8"/><circle cx="87.4" cy="96.0" r="1.1" fill="#30e0f0"/><circle cx="97.9" cy="98.6" r="1.2" fill="#30e0f0"/><circle cx="98.6" cy="90.0" r="0.9" fill="#30e0f0"/><circle cx="85.3" cy="89.3" r="0.7" fill="#30c0e0"/><circle cx="72.9" cy="73.1" r="0.6" fill="#30b0d0"/><circle cx="6.9" cy="88.6" r="0.6" fill="#2a90b0"/><circle cx="61.4" cy="97.1" r="0.5" fill="#2a90c0"/><circle cx="68.1" cy="100.3" r="0.7" fill="#2a90d0"/><circle cx="94.3" cy="108.1" r="1.1" fill="#30d8f0"/><circle cx="72.9" cy="111.7" r="0.9" fill="#30c0e0"/><circle cx="79.3" cy="111.0" r="0.7" fill="#30c0e0"/><circle cx="88.6" cy="68.9" r="0.6" fill="#30b0d0"/><circle cx="86.4" cy="58.9" r="0.6" fill="#30b0d0"/><circle cx="74.3" cy="63.9" r="0.7" fill="#30b0d0"/><circle cx="123.6" cy="58.1" r="1.2" fill="#30d0f0"/><circle cx="114.3" cy="76.4" r="2.7" fill="#2a80e8" opacity="0.25"/><circle cx="114.3" cy="76.4" r="1.5" fill="#2a80e8"/><circle cx="131.7" cy="75.6" r="1.1" fill="#2a80e8"/><circle cx="171.9" cy="78.4" r="3.4" fill="#30e0f8" opacity="0.25"/><circle cx="171.9" cy="78.4" r="2.2" fill="#30e0f8"/><circle cx="177.4" cy="82.0" r="3.2" fill="#30e8f8" opacity="0.25"/><circle cx="177.4" cy="82.0" r="2.0" fill="#30e8f8"/><circle cx="179.6" cy="78.9" r="0.8" fill="#30c8e0"/><circle cx="138.9" cy="87.7" r="1.3" fill="#30d0f8"/><circle cx="114.3" cy="92.1" r="1.3" fill="#30d0f8"/><circle cx="142.1" cy="99.1" r="3.5" fill="#38e8f8" opacity="0.25"/><circle cx="142.1" cy="99.1" r="2.3" fill="#38e8f8"/><circle cx="162.9" cy="100.3" r="1.2" fill="#2a80e8"/><circle cx="174.3" cy="106.3" r="1.4" fill="#30e0f8"/><circle cx="177.9" cy="95.7" r="0.9" fill="#30d0e8"/><circle cx="170.0" cy="85.7" r="0.8" fill="#2a80d0"/><circle cx="111.9" cy="107.7" r="1.1" fill="#30d0f0"/><circle cx="107.9" cy="110.3" r="1.0" fill="#2a90e0"/><circle cx="192.1" cy="110.6" r="1.1" fill="#30d8f0"/><circle cx="199.5" cy="87.0" r="1.2" fill="#30c8e8"/><circle cx="141.0" cy="111.5" r="1.0" fill="#30b0e0"/><circle cx="104.3" cy="98.4" r="0.6" fill="#2a90c0"/><circle cx="114.3" cy="67.7" r="0.6" fill="#2a90c0"/><circle cx="105.0" cy="63.1" r="0.6" fill="#2a90c0"/><circle cx="127.1" cy="58.6" r="0.6" fill="#2a90c0"/><circle cx="60.5" cy="39.3" r="0.45" fill="#40c0e0" opacity="0.68"/><circle cx="86.4" cy="19.4" r="0.26" fill="#40c0e0" opacity="0.49"/><circle cx="123.9" cy="50.9" r="0.48" fill="#40c0e0" opacity="0.35"/><circle cx="71.5" cy="62.6" r="0.39" fill="#40c0e0" opacity="0.53"/><circle cx="107.4" cy="61.0" r="0.32" fill="#40c0e0" opacity="0.67"/><circle cx="91.5" cy="49.4" r="0.45" fill="#40c0e0" opacity="0.36"/><circle cx="80.4" cy="53.7" r="0.25" fill="#40c0e0" opacity="0.65"/><circle cx="94.4" cy="72.1" r="0.50" fill="#40c0e0" opacity="0.65"/><circle cx="74.4" cy="104.5" r="0.38" fill="#40c0e0" opacity="0.57"/><circle cx="106.7" cy="101.1" r="0.42" fill="#40c0e0" opacity="0.69"/><circle cx="106.5" cy="50.6" r="0.34" fill="#40c0e0" opacity="0.37"/><circle cx="95.6" cy="65.2" r="0.33" fill="#40c0e0" opacity="0.54"/><circle cx="127.6" cy="60.6" r="0.33" fill="#40c0e0" opacity="0.42"/><circle cx="101.9" cy="41.3" r="0.33" fill="#40c0e0" opacity="0.49"/><circle cx="87.6" cy="54.1" r="0.49" fill="#40c0e0" opacity="0.31"/><circle cx="89.9" cy="25.2" r="0.25" fill="#40c0e0" opacity="0.62"/><circle cx="68.1" cy="77.6" r="0.25" fill="#40c0e0" opacity="0.32"/><circle cx="116.2" cy="100.7" r="0.30" fill="#40c0e0" opacity="0.60"/><circle cx="143.9" cy="41.6" r="0.34" fill="#40c0e0" opacity="0.44"/><circle cx="47.3" cy="55.2" r="0.28" fill="#40c0e0" opacity="0.60"/><circle cx="104.5" cy="25.9" r="0.26" fill="#40c0e0" opacity="0.68"/><circle cx="109.2" cy="68.9" r="0.40" fill="#40c0e0" opacity="0.67"/><circle cx="59.6" cy="94.5" r="0.39" fill="#40c0e0" opacity="0.42"/><circle cx="83.6" cy="70.3" r="0.27" fill="#40c0e0" opacity="0.36"/><circle cx="58.5" cy="3.5" r="0.29" fill="#40c0e0" opacity="0.32"/><circle cx="120.8" cy="58.1" r="0.35" fill="#40c0e0" opacity="0.39"/><circle cx="51.1" cy="41.3" r="0.36" fill="#40c0e0" opacity="0.47"/><circle cx="142.3" cy="73.7" r="0.26" fill="#40c0e0" opacity="0.50"/><circle cx="97.0" cy="51.9" r="0.43" fill="#40c0e0" opacity="0.68"/><circle cx="59.9" cy="36.8" r="0.28" fill="#40c0e0" opacity="0.47"/><circle cx="118.5" cy="88.0" r="0.32" fill="#40c0e0" opacity="0.48"/><circle cx="138.9" cy="59.8" r="0.49" fill="#40c0e0" opacity="0.48"/><circle cx="49.7" cy="62.2" r="0.37" fill="#40c0e0" opacity="0.42"/><circle cx="78.4" cy="65.8" r="0.34" fill="#40c0e0" opacity="0.70"/><circle cx="124.0" cy="53.7" r="0.37" fill="#40c0e0" opacity="0.44"/><circle cx="106.9" cy="67.6" r="0.45" fill="#40c0e0" opacity="0.65"/><circle cx="61.7" cy="84.2" r="0.44" fill="#40c0e0" opacity="0.58"/><circle cx="68.3" cy="33.9" r="0.34" fill="#40c0e0" opacity="0.58"/><circle cx="84.4" cy="80.4" r="0.44" fill="#40c0e0" opacity="0.58"/><circle cx="73.6" cy="101.8" r="0.41" fill="#40c0e0" opacity="0.53"/><circle cx="121.4" cy="61.6" r="0.31" fill="#40c0e0" opacity="0.57"/><circle cx="45.2" cy="67.7" r="0.41" fill="#40c0e0" opacity="0.62"/><circle cx="69.3" cy="81.1" r="0.43" fill="#40c0e0" opacity="0.63"/><circle cx="61.7" cy="88.0" r="0.47" fill="#40c0e0" opacity="0.58"/><circle cx="151.9" cy="53.3" r="0.38" fill="#40c0e0" opacity="0.51"/><circle cx="113.9" cy="89.6" r="0.48" fill="#40c0e0" opacity="0.49"/><circle cx="75.7" cy="33.2" r="0.43" fill="#40c0e0" opacity="0.37"/><circle cx="96.3" cy="36.7" r="0.42" fill="#40c0e0" opacity="0.47"/><circle cx="59.2" cy="38.2" r="0.41" fill="#40c0e0" opacity="0.59"/><circle cx="104.5" cy="61.8" r="0.36" fill="#40c0e0" opacity="0.56"/><circle cx="97.4" cy="86.9" r="0.41" fill="#40c0e0" opacity="0.32"/><circle cx="72.4" cy="62.3" r="0.26" fill="#40c0e0" opacity="0.35"/><circle cx="83.5" cy="70.4" r="0.30" fill="#40c0e0" opacity="0.31"/><circle cx="66.1" cy="63.8" r="0.40" fill="#40c0e0" opacity="0.54"/><circle cx="94.1" cy="98.8" r="0.25" fill="#40c0e0" opacity="0.46"/><circle cx="85.4" cy="78.2" r="0.28" fill="#40c0e0" opacity="0.63"/><circle cx="85.2" cy="63.5" r="0.40" fill="#40c0e0" opacity="0.34"/><circle cx="68.1" cy="55.4" r="0.40" fill="#40c0e0" opacity="0.68"/><circle cx="100.9" cy="43.0" r="0.45" fill="#40c0e0" opacity="0.56"/><circle cx="80.6" cy="67.3" r="0.40" fill="#40c0e0" opacity="0.53"/><circle cx="197.9" cy="29.0" r="0.3" fill="#4090b0" opacity="0.38"/><circle cx="167.6" cy="26.8" r="0.3" fill="#4090b0" opacity="0.20"/><circle cx="155.4" cy="17.0" r="0.3" fill="#4090b0" opacity="0.38"/><circle cx="157.0" cy="18.9" r="0.3" fill="#4090b0" opacity="0.47"/><circle cx="168.8" cy="13.0" r="0.3" fill="#4090b0" opacity="0.27"/><circle cx="164.6" cy="29.2" r="0.3" fill="#4090b0" opacity="0.31"/><circle cx="198.1" cy="27.4" r="0.3" fill="#4090b0" opacity="0.38"/><circle cx="163.0" cy="29.4" r="0.3" fill="#4090b0" opacity="0.35"/><circle cx="170.8" cy="9.6" r="0.3" fill="#4090b0" opacity="0.50"/><circle cx="174.6" cy="8.6" r="0.3" fill="#4090b0" opacity="0.34"/><circle cx="156.1" cy="18.7" r="0.3" fill="#4090b0" opacity="0.33"/><circle cx="164.7" cy="23.5" r="0.3" fill="#4090b0" opacity="0.45"/><circle cx="150.7" cy="16.0" r="0.3" fill="#4090b0" opacity="0.28"/><circle cx="196.8" cy="23.5" r="0.3" fill="#4090b0" opacity="0.27"/><circle cx="163.4" cy="4.6" r="0.3" fill="#4090b0" opacity="0.50"/><circle cx="164.7" cy="18.2" r="0.3" fill="#4090b0" opacity="0.34"/><circle cx="182.2" cy="18.1" r="0.3" fill="#4090b0" opacity="0.42"/><circle cx="155.9" cy="22.8" r="0.3" fill="#4090b0" opacity="0.29"/><circle cx="176.7" cy="10.1" r="0.3" fill="#4090b0" opacity="0.29"/><circle cx="176.5" cy="13.9" r="0.3" fill="#4090b0" opacity="0.31"/><circle cx="187.3" cy="17.7" r="0.3" fill="#4090b0" opacity="0.21"/><circle cx="162.6" cy="13.7" r="0.3" fill="#4090b0" opacity="0.47"/><circle cx="194.4" cy="16.4" r="0.3" fill="#4090b0" opacity="0.20"/><circle cx="188.9" cy="12.8" r="0.3" fill="#4090b0" opacity="0.37"/><circle cx="185.4" cy="19.0" r="0.3" fill="#4090b0" opacity="0.34"/></svg>
</div>

<div class="a" style="left:600px;top:399px;width:54px;height:20px;background:#1a76e0"></div>
<div class="t" style="left:616.3px;top:405.9px;font-size:7.7px;color:#fff">Export</div>
</body></html>
